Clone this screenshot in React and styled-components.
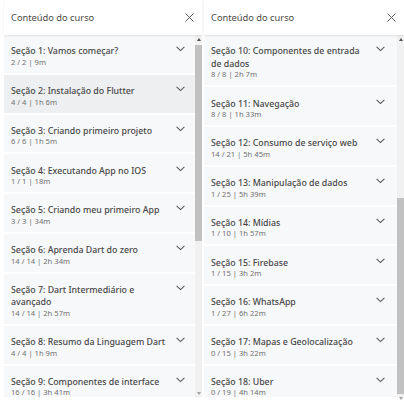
import React from 'react';
import styled, { createGlobalStyle } from 'styled-components';

const GlobalStyle = createGlobalStyle`
  html, body {
    margin: 0;
    padding: 0;
    background: #ffffff;
  }
  body {
    font-family: "Noto Sans", "Open Sans", sans-serif;
  }
`;

const Page = styled.div`
  width: 404px;
  height: 404px;
  display: flex;
  overflow: hidden;
  background: #ffffff;
`;

const Panel = styled.div`
  width: 202px;
  height: 404px;
  padding-left: ${({ $left }) => $left}px;
  box-sizing: border-box;
  display: flex;
  flex-direction: column;
`;

const Header = styled.div`
  height: 35px;
  flex: none;
  display: flex;
  align-items: center;
  justify-content: space-between;
  padding: 0 8px 0 7px;
  box-shadow: 0 1px 2px rgba(0, 0, 0, 0.09);
  position: relative;
  z-index: 1;
`;

const Title = styled.span`
  font-size: 9.3px;
  color: #4b4b4b;
`;

const Body = styled.div`
  flex: none;
  height: 362px;
  display: flex;
`;

const List = styled.div`
  flex: 1;
  overflow: hidden;
  display: flex;
  flex-direction: column;
  gap: 2px;
`;

const Item = styled.div`
  flex: none;
  display: flex;
  align-items: flex-start;
  padding: 10.25px 10px 6px 7px;
  background: ${({ $hover }) => ($hover ? '#eeeff1' : '#f7f8fa')};
`;

const ItemText = styled.div`
  width: 158px;
  flex: none;
`;

const ItemTitle = styled.div`
  font-size: 8.8px;
  line-height: 12.5px;
  font-weight: 500;
  color: #474747;
`;

const ItemMeta = styled.div`
  font-size: 7.6px;
  line-height: 9px;
  color: #707070;
`;

const Chevron = styled.svg`
  flex: none;
  width: 9px;
  height: 6px;
  margin: 1px 0 0 7px;
`;

const Scrollbar = styled.div`
  width: 7px;
  flex: none;
  background: #f1f1f1;
  display: flex;
  flex-direction: column;
  align-items: center;
`;

const Arrow = styled.div`
  flex: none;
  height: 8px;
  display: flex;
  align-items: center;
  justify-content: center;
  &::before {
    content: '';
    border-left: 2.5px solid transparent;
    border-right: 2.5px solid transparent;
    ${({ $down }) => ($down ? 'border-top: 3px solid #a3a3a3;' : 'border-bottom: 3px solid #505050;')}
  }
`;

const Track = styled.div`
  flex: 1;
  width: 100%;
  padding-top: ${({ $offset }) => $offset}px;
  box-sizing: border-box;
`;

const Thumb = styled.div`
  width: 100%;
  height: ${({ $size }) => $size}px;
  background: #c1c1c1;
`;

const CloseIcon = () => (
  <svg width="9" height="9" viewBox="0 0 9 9">
    <path d="M0.5 0.5 L8.5 8.5 M8.5 0.5 L0.5 8.5" stroke="#5a5a5a" strokeWidth="1" fill="none" />
  </svg>
);

const leftSections = [
  { n: 1, name: 'Vamos começar?', meta: '2 / 2 | 9m' },
  { n: 2, name: 'Instalação do Flutter', meta: '4 / 4 | 1h 6m', hover: true },
  { n: 3, name: 'Criando primeiro projeto', meta: '6 / 6 | 1h 5m' },
  { n: 4, name: 'Executando App no IOS', meta: '1 / 1 | 18m' },
  { n: 5, name: 'Criando meu primeiro App', meta: '3 / 3 | 34m' },
  { n: 6, name: 'Aprenda Dart do zero', meta: '14 / 14 | 2h 34m' },
  { n: 7, name: 'Dart Intermediário e avançado', meta: '14 / 14 | 2h 57m' },
  { n: 8, name: 'Resumo da Linguagem Dart', meta: '4 / 4 | 1h 9m' },
  { n: 9, name: 'Componentes de interface', meta: '16 / 16 | 3h 41m' },
];

const rightSections = [
  { n: 10, name: 'Componentes de entrada de dados', meta: '8 / 8 | 2h 7m' },
  { n: 11, name: 'Navegação', meta: '8 / 8 | 1h 33m' },
  { n: 12, name: 'Consumo de serviço web', meta: '14 / 21 | 5h 45m' },
  { n: 13, name: 'Manipulação de dados', meta: '1 / 25 | 5h 39m' },
  { n: 14, name: 'Mídias', meta: '1 / 10 | 1h 57m' },
  { n: 15, name: 'Firebase', meta: '1 / 15 | 3h 2m' },
  { n: 16, name: 'WhatsApp', meta: '1 / 27 | 6h 22m' },
  { n: 17, name: 'Mapas e Geolocalização', meta: '0 / 15 | 3h 22m' },
  { n: 18, name: 'Uber', meta: '0 / 19 | 4h 14m' },
];

const CoursePanel = ({ sections, left, thumbOffset, thumbSize }) => (
  <Panel $left={left}>
    <Header>
      <Title>Conteúdo do curso</Title>
      <CloseIcon />
    </Header>
    <Body>
      <List>
        {sections.map((s) => (
          <Item key={s.n} $hover={s.hover}>
            <ItemText>
              <ItemTitle>Seção {s.n}: {s.name}</ItemTitle>
              <ItemMeta>{s.meta}</ItemMeta>
            </ItemText>
            <Chevron viewBox="0 0 9 6">
              <path d="M0.6 0.8 L4.5 4.6 L8.4 0.8" stroke="#555" strokeWidth="1.1" fill="none" />
            </Chevron>
          </Item>
        ))}
      </List>
      <Scrollbar>
        <Arrow />
        <Track $offset={thumbOffset}>
          <Thumb $size={thumbSize} />
        </Track>
        <Arrow $down />
      </Scrollbar>
    </Body>
  </Panel>
);

const App = () => (
  <>
    <GlobalStyle />
    <Page>
      <CoursePanel sections={leftSections} left={4} thumbOffset={2} thumbSize={196} />
      <CoursePanel sections={rightSections} left={2} thumbOffset={155} thumbSize={196} />
    </Page>
  </>
);

export default App;
